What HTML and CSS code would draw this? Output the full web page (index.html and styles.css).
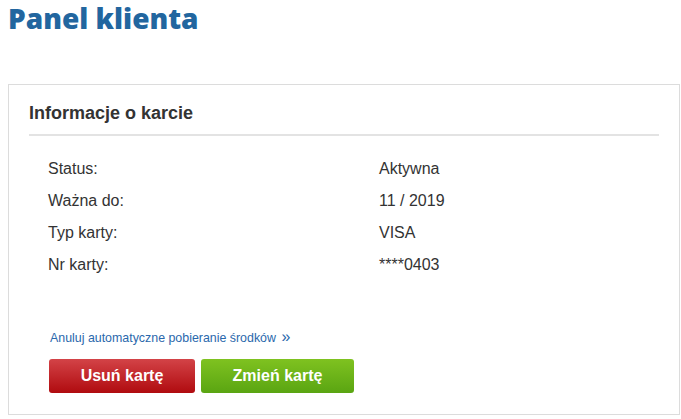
FILE: index.html
```html
<!DOCTYPE html>
<html lang="pl">
<head>
<meta charset="utf-8">
<title>Panel klienta</title>
<link rel="stylesheet" href="styles.css">
</head>
<body>
<h1 class="page-title">Panel klienta</h1>
<section class="card-box">
  <h2 class="box-title">Informacje o karcie</h2>
  <dl class="info">
    <div class="info-row"><dt>Status:</dt><dd>Aktywna</dd></div>
    <div class="info-row"><dt>Ważna do:</dt><dd>11 / 2019</dd></div>
    <div class="info-row"><dt>Typ karty:</dt><dd>VISA</dd></div>
    <div class="info-row"><dt>Nr karty:</dt><dd>****0403</dd></div>
  </dl>
  <a class="cancel-link" href="#">Anuluj automatyczne pobieranie środków <span class="raquo">»</span></a>
  <div class="actions">
    <button class="btn btn-red" type="button">Usuń kartę</button>
    <button class="btn btn-green" type="button">Zmień kartę</button>
  </div>
</section>
</body>
</html>
```
FILE: styles.css
```css
html, body {
  margin: 0;
  padding: 0;
  background: #fff;
}
body {
  padding: 0 8px;
  font-family: "Liberation Sans", Arial, sans-serif;
  color: #333;
}
.page-title {
  margin: 0;
  padding-top: 1px;
  font-family: "Open Sans", sans-serif;
  font-weight: 800;
  font-size: 28px;
  line-height: 34px;
  color: #22669f;
}
.card-box {
  margin-top: 49px;
  width: 672px;
  box-sizing: border-box;
  border: 1px solid #dcdcdc;
  padding: 0 20px 0 20px;
  height: 331px;
}
.box-title {
  margin: 0;
  padding-top: 16px;
  font-size: 18px;
  line-height: 24px;
  font-weight: 700;
  color: #333;
  padding-bottom: 9px;
  border-bottom: 2px solid #e3e3e3;
}
.info {
  margin: 17px 0 0 0;
  padding: 0 0 0 19px;
}
.info-row {
  display: flex;
  height: 32px;
  align-items: center;
  font-size: 16px;
}
.info-row dt {
  width: 331px;
}
.info-row dd {
  margin: 0;
}
.cancel-link {
  display: block;
  margin-top: 48px;
  margin-left: 21px;
  font-size: 12.4px;
  line-height: 16px;
  color: #2a68ac;
  text-decoration: none;
}
.raquo {
  font-size: 16px;
  margin-left: 2px;
}
.actions {
  display: flex;
  gap: 6px;
  margin-top: 13px;
  margin-left: 20px;
}
.btn {
  height: 34px;
  border: none;
  border-radius: 3px;
  font-family: "Liberation Sans", Arial, sans-serif;
  font-weight: 700;
  font-size: 16px;
  color: #fff;
  padding: 0;
}
.btn-red {
  width: 146px;
  background: linear-gradient(#d34347, #b00b0f);
}
.btn-green {
  width: 153px;
  background: linear-gradient(#7fc220, #5aa512);
}
```
